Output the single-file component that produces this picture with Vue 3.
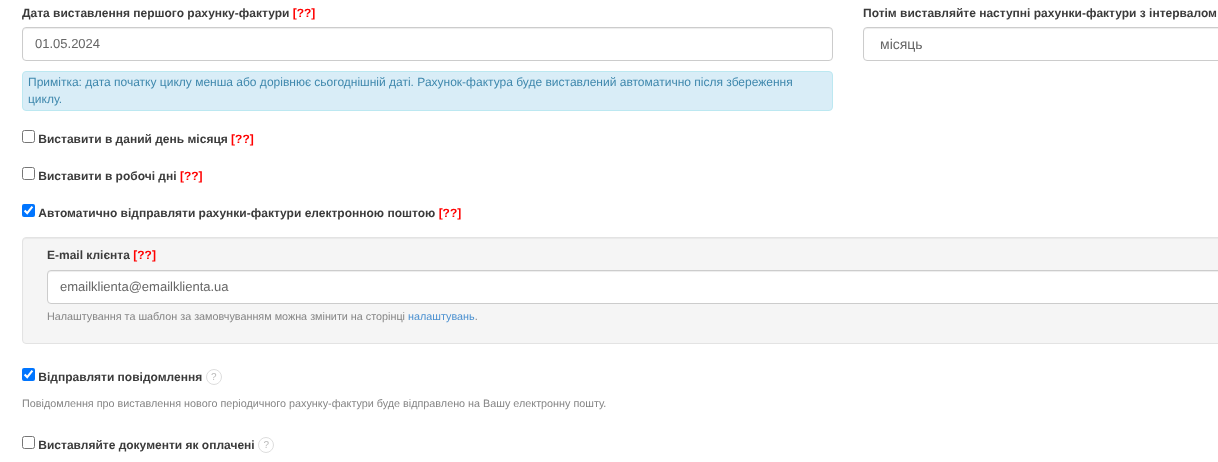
<template>
  <form class="page" @submit.prevent>
    <div class="cols">
      <div class="field">
        <label class="lbl">Дата виставлення першого рахунку-фактури <span class="req">[??]</span></label>
        <input class="ctl" type="text" v-model="startDate" />
        <div class="note">
          Примітка: дата початку циклу менша або дорівнює сьогоднішній даті. Рахунок-фактура буде виставлений автоматично після збереження циклу.
        </div>
      </div>
      <div class="field">
        <label class="lbl">Потім виставляйте наступні рахунки-фактури з інтервалом</label>
        <select class="ctl sel" v-model="interval">
          <option value="month">місяць</option>
        </select>
      </div>
    </div>

    <div class="check first">
      <input type="checkbox" v-model="sameDay" />
      <label class="lbl">Виставити в даний день місяця <span class="req">[??]</span></label>
    </div>
    <div class="check">
      <input type="checkbox" v-model="workDays" />
      <label class="lbl">Виставити в робочі дні <span class="req">[??]</span></label>
    </div>
    <div class="check">
      <input type="checkbox" v-model="autoSend" />
      <label class="lbl">Автоматично відправляти рахунки-фактури електронною поштою <span class="req">[??]</span></label>
    </div>

    <div class="well">
      <label class="lbl">E-mail клієнта <span class="req">[??]</span></label>
      <input class="ctl" type="text" v-model="email" />
      <p class="help">Налаштування та шаблон за замовчуванням можна змінити на сторінці <a href="#">налаштувань</a>.</p>
    </div>

    <div class="check notify">
      <input type="checkbox" v-model="notify" />
      <label class="lbl">Відправляти повідомлення</label>
      <span class="hint">?</span>
    </div>
    <p class="help notify-help">Повідомлення про виставлення нового періодичного рахунку-фактури буде відправлено на Вашу електронну пошту.</p>

    <div class="check paid">
      <input type="checkbox" v-model="paid" />
      <label class="lbl">Виставляйте документи як оплачені</label>
      <span class="hint">?</span>
    </div>
  </form>
</template>

<script setup>
import { ref } from 'vue'

const startDate = ref('01.05.2024')
const interval = ref('month')
const email = ref('emailklienta@emailklienta.ua')
const sameDay = ref(false)
const workDays = ref(false)
const autoSend = ref(true)
const notify = ref(true)
const paid = ref(false)
</script>

<style>
html,
body {
  margin: 0;
  background: #fff;
  overflow: hidden;
}
</style>

<style scoped>
.page {
  width: 1652px;
  height: 462px;
  padding: 5px 0 0 22px;
  box-sizing: content-box;
  font-family: "Liberation Sans", Arial, sans-serif;
  font-size: 12px;
  line-height: 17px;
  color: #3b3b3b;
  text-rendering: geometricPrecision;
  will-change: transform;
}

.cols {
  display: grid;
  grid-template-columns: 811px 811px;
  gap: 30px;
}

.lbl {
  font-weight: 700;
}

.field .lbl,
.well .lbl {
  display: block;
  margin-bottom: 5px;
}

.well .lbl {
  padding-top: 1px;
  margin-bottom: 6px;
}

.req {
  color: #f00;
}

.ctl {
  display: block;
  width: 100%;
  height: 34px;
  box-sizing: border-box;
  padding: 5px 12px 7px;
  font-family: inherit;
  font-size: 13px;
  line-height: 20px;
  color: #666;
  background: #fff;
  border: 1px solid #ccc;
  border-radius: 4px;
  box-shadow: inset 0 1px 1px rgba(0, 0, 0, 0.075);
  text-rendering: geometricPrecision;
}

.sel {
  padding: 6px 12px;
  font-size: 14px;
}

.note {
  margin-top: 10px;
  padding: 2px 5px;
  color: #3f88ad;
  background: #d9edf7;
  border: 1px solid #bce8f1;
  border-radius: 4px;
}

.check {
  display: flex;
  align-items: flex-start;
  margin-top: 19px;
}

.check input {
  flex: none;
  width: 13px;
  height: 13px;
  margin: 0 3.3px 0 0;
}

.check .lbl {
  padding-top: 1px;
}

.well {
  margin-top: 15px;
  padding: 8px 24px 19px;
  height: 107px;
  box-sizing: border-box;
  background: #f5f5f5;
  border: 1px solid #e3e3e3;
  border-radius: 4px;
  box-shadow: inset 0 1px 1px rgba(0, 0, 0, 0.05);
}

.help {
  margin: 5px 0 0;
  font-size: 10.8px;
  line-height: 16px;
  color: #858585;
}

.help a {
  color: #4a90d0;
  text-decoration: none;
}

.notify {
  margin-top: 24px;
}

.notify-help {
  margin-top: 10px;
}

.paid {
  margin-top: 24px;
}

.hint {
  flex: none;
  width: 16px;
  height: 16px;
  box-sizing: border-box;
  margin: 1px 0 0 3.5px;
  border: 1px solid #ddd;
  border-radius: 50%;
  background: #fff;
  color: #bbb;
  font-size: 10px;
  line-height: 16px;
  text-align: center;
}
</style>
